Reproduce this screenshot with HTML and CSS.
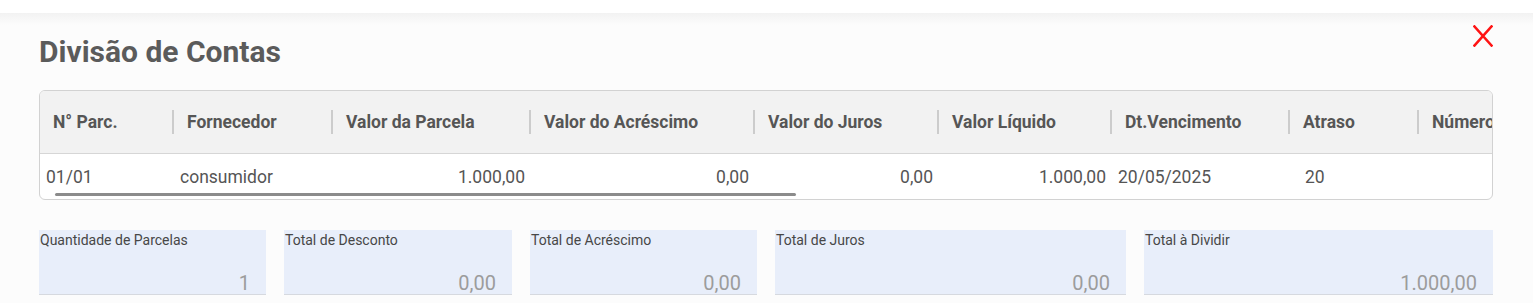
FILE: index.html
```html
<!DOCTYPE html>
<html lang="pt-BR">
<head>
    <meta charset="UTF-8">
    <title>Divisão de Contas</title>
    <link rel="stylesheet" href="styles.css">
</head>
<body>
    <div class="dialog">
        <!-- cabeçalho -->
        <div class="dialog-header">
            <h2 class="dialog-title">Divisão de Contas</h2>
            <svg class="close-icon" viewBox="0 0 20 22" fill="none" xmlns="http://www.w3.org/2000/svg">
                <path d="M1.5 1.5L18.5 20.5M18.5 1.5L1.5 20.5" stroke="currentColor" stroke-width="2.6" stroke-linecap="square"/>
            </svg>
        </div>

        <!-- grade de parcelas -->
        <div class="grid-wrap">
            <table class="grid">
                <colgroup>
                    <col style="width: 134px">
                    <col style="width: 159px">
                    <col style="width: 198px">
                    <col style="width: 224px">
                    <col style="width: 184px">
                    <col style="width: 173px">
                    <col style="width: 178px">
                    <col style="width: 129px">
                    <col style="width: 170px">
                </colgroup>
                <thead>
                    <tr>
                        <th>N° Parc.</th>
                        <th>Fornecedor</th>
                        <th>Valor da Parcela</th>
                        <th>Valor do Acréscimo</th>
                        <th>Valor do Juros</th>
                        <th>Valor Líquido</th>
                        <th>Dt.Vencimento</th>
                        <th>Atraso</th>
                        <th>Número Documento</th>
                    </tr>
                </thead>
                <tbody>
                    <tr>
                        <td>01/01</td>
                        <td>consumidor</td>
                        <td class="num">1.000,00</td>
                        <td class="num">0,00</td>
                        <td class="num">0,00</td>
                        <td class="num">1.000,00</td>
                        <td>20/05/2025</td>
                        <td class="days">20</td>
                        <td></td>
                    </tr>
                </tbody>
            </table>
            <div class="scroll-thumb"></div>
        </div>

        <!-- totais -->
        <div class="totals">
            <div class="field">
                <span class="field-label">Quantidade de Parcelas</span>
                <span class="field-value">1</span>
            </div>
            <div class="field">
                <span class="field-label">Total de Desconto</span>
                <span class="field-value">0,00</span>
            </div>
            <div class="field">
                <span class="field-label">Total de Acréscimo</span>
                <span class="field-value">0,00</span>
            </div>
            <div class="field">
                <span class="field-label">Total de Juros</span>
                <span class="field-value">0,00</span>
            </div>
            <div class="field">
                <span class="field-label">Total à Dividir</span>
                <span class="field-value">1.000,00</span>
            </div>
        </div>
    </div>
</body>
</html>
```

FILE: styles.css
```css
body {
    margin: 0;
    padding: 0;
    background: #ffffff;
    font-family: Roboto, "Liberation Sans", Arial, sans-serif;
    color: #555555;
}

.dialog {
    margin-top: 13px;
    height: 290px;
    box-sizing: border-box;
    padding: 21px 40px 0 39px;
    background: linear-gradient(#f2f2f2, #fcfcfc 12px);
}

.dialog-header {
    display: flex;
    justify-content: space-between;
    align-items: flex-start;
}

.dialog-title {
    margin: 0;
    font-size: 30px;
    line-height: 36px;
    font-weight: 700;
    color: #5b5b5b;
}

.close-icon {
    width: 20px;
    height: 22px;
    margin-top: -9px;
    color: #ff1414;
    cursor: pointer;
}

.grid-wrap {
    position: relative;
    margin-top: 20px;
    border: 1px solid #d2d2d2;
    border-radius: 6px;
    overflow: hidden;
    background: #ffffff;
}

.grid {
    table-layout: fixed;
    border-collapse: collapse;
    width: 1549px;
    font-size: 17.5px;
}

.grid th {
    position: relative;
    height: 62px;
    padding: 0 13px;
    background: #f2f2f2;
    border-bottom: 1px solid #d6d6d6;
    text-align: left;
    font-weight: 700;
    color: #565656;
    white-space: nowrap;
    overflow: hidden;
}

.grid th::after {
    content: '';
    position: absolute;
    right: 0;
    top: 19px;
    width: 2px;
    height: 24px;
    background: #cccccc;
}

.grid td {
    height: 45px;
    padding: 0 6px;
    color: #555555;
    white-space: nowrap;
}

.grid td.num {
    text-align: right;
}

.grid td.days {
    padding-left: 15px;
}

.scroll-thumb {
    position: absolute;
    left: 15px;
    bottom: 3px;
    width: 741px;
    height: 3px;
    border-radius: 2px;
    background: #8b8b8b;
}

.totals {
    display: grid;
    grid-template-columns: 227fr 228fr 227fr 351fr 349fr;
    gap: 18px;
    margin-top: 30px;
}

.field {
    display: flex;
    flex-direction: column;
    height: 61px;
    padding: 3px 16px 0 1px;
    background: #e8eefa;
    border-bottom: 1px solid #d6d9df;
}

.field-label {
    font-size: 14px;
    line-height: 15px;
    color: #474747;
}

.field-value {
    margin-top: auto;
    font-size: 20px;
    line-height: 22px;
    text-align: right;
    color: #9c9c9c;
}
```
